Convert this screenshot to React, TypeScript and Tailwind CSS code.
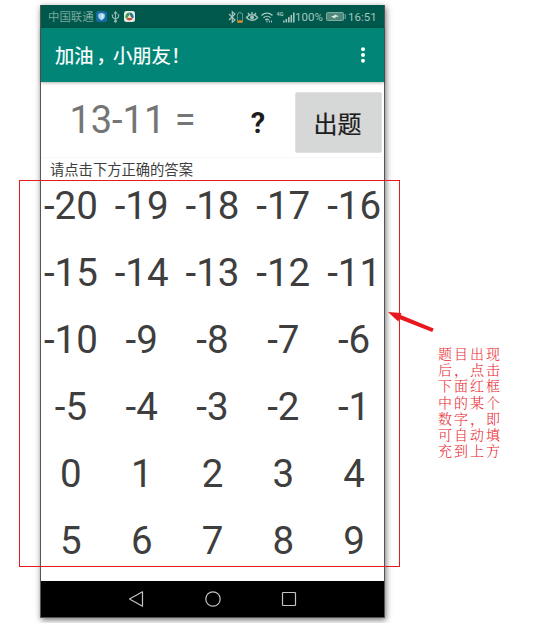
import React from 'react';

const answers = Array.from({ length: 30 }, (_, i) => i - 20);
const noteLines = ['题目出现', '后，点击', '下面红框', '中的某个', '数字，即', '可自动填', '充到上方'];

function ShieldIcon() {
  return (
    <svg className="h-[11px] w-[11px]" viewBox="0 0 11 11">
      <rect width="11" height="11" rx="2.5" fill="#176ba0" />
      <path d="M5.5 1.8 8.8 2.9v2.7c0 1.8-1.4 3-3.3 3.8-1.9-.8-3.3-2-3.3-3.8V2.9z" fill="#9bd3ee" />
      <path d="M5.5 3v5c1.2-.6 2-1.3 2-2.5V3.7z" fill="#d6eff8" />
    </svg>
  );
}

function UsbIcon() {
  return (
    <svg className="h-3 w-[9px]" viewBox="0 0 9 12" fill="none" stroke="#8fb9b2" strokeWidth="1.1">
      <path d="M4.5 1v9.5M3 2.6 4.5.8 6 2.6M1.5 4v2.2l3 2M7.5 3.5v2.7l-3 2" />
      <circle cx="4.5" cy="10.3" r="0.9" fill="#8fb9b2" />
      <path d="M.7 4h1.6M6.7 3.8h1.6" />
    </svg>
  );
}

function BrowserIcon() {
  return (
    <svg className="h-[11px] w-[11px]" viewBox="0 0 11 11">
      <rect width="11" height="11" rx="2.5" fill="#e3eae3" />
      <path d="M5.5 1.5A4 4 0 0 0 2 7.5l2-1.3 1.7-2.7z" fill="#3c9b4b" />
      <path d="M5.5 1.5a4 4 0 0 1 3.5 6L6.7 6l-1-2.5z" fill="#2b6e9b" />
      <path d="M2.2 7.7a4 4 0 0 0 6.6 0L6.7 6.8H4z" fill="#c94c38" />
      <path d="M3.8 6.8 5.8 3.5l1.5 3.3z" fill="#f1e4b0" />
    </svg>
  );
}

function StatusIcons() {
  return (
    <svg className="h-[14px] w-[68px] shrink-0" viewBox="0 0 68 14" fill="none" stroke="#a3c5be" strokeWidth="1">
      <path d="m1 4 6 6-2.7 2.3V1.7L7 4l-6 6" strokeWidth="1.2" />
      <path d="M9.5 3.5h1.3V2.3h2v1.2h1.7v8.8h-5z" stroke="#648f84" />
      <path d="M9.6 11.5h4.6" stroke="#f38b16" strokeWidth="2.2" />
      <path d="M18.5 7.5c3-3.8 8-3.8 11 0-3 3.8-8 3.8-11 0zM20 3l1.5 1.8M24 2v2.5M28 3l-1.5 1.8" strokeWidth="1.4" />
      <circle cx="24" cy="7.5" r="2" fill="#a3c5be" stroke="none" />
      <path d="M33.5 5.5c3.3-3 7.7-3 11 0M35.5 7.8c2-1.9 5-1.9 7 0M37.3 10c1-.9 2.4-.9 3.4 0" strokeWidth="1.4" />
      <path d="M39 10.5v2M41.5 10.5v2M43.5 10.5v2" strokeWidth="1" />
      <text x="48.5" y="6" fontSize="5.5" fontWeight="700" fontFamily="Roboto, sans-serif" fill="#a3c5be" stroke="none">4G</text>
      <path d="M55.8 10.5v2M58.3 9v3.5M60.8 7v5.5M63.3 5v7.5M65.8 2.5v10" strokeWidth="1.6" />
    </svg>
  );
}

function StatusBar() {
  return (
    <div className="flex h-[23px] shrink-0 items-center bg-[#00574b] pl-[7px] text-[#a3c5be]">
      <span className="w-[48px] pt-[3px] text-[11.4px] whitespace-nowrap text-[#78a9a0]">中国联通</span>
      <ShieldIcon />
      <div className="ml-[4px] flex"><UsbIcon /></div>
      <div className="ml-[4px] flex"><BrowserIcon /></div>
      <div className="ml-[93px] flex"><StatusIcons /></div>
      <span className="-ml-px w-[31px] pt-[2px] text-[11.5px] whitespace-nowrap">100%</span>
      <svg className="h-[9px] w-[20px]" viewBox="0 0 20 9">
        <rect x=".5" y=".5" width="17" height="8" rx="1" fill="#4f887c" stroke="#80aba1" />
        <path d="M19.2 2v5" stroke="#80aba1" />
        <path d="m5 4.5 3-.8.5-1.2L13 4.3l-3.5.8-.5 1.4z" fill="#dcece6" />
      </svg>
      <span className="ml-[2px] pt-[2px] text-[11.5px] whitespace-nowrap">16:51</span>
    </div>
  );
}

function NavBar() {
  return (
    <div className="mt-auto flex h-[36px] shrink-0 items-center justify-center gap-[60.5px] bg-black">
      <svg className="h-4 w-4" viewBox="0 0 16 16" fill="none" stroke="#c4c4c4" strokeWidth="1.2">
        <path d="M1.5 8 14.5.8v14.4z" strokeLinejoin="round" />
      </svg>
      <svg className="h-4 w-4" viewBox="0 0 16 16" fill="none" stroke="#c4c4c4" strokeWidth="1.2">
        <circle cx="8" cy="8" r="7.2" />
      </svg>
      <svg className="h-4 w-4" viewBox="0 0 16 16" fill="none" stroke="#c4c4c4" strokeWidth="1.2">
        <rect x="1.5" y="1.5" width="13" height="13" rx=".5" />
      </svg>
    </div>
  );
}

export default function App() {
  return (
    <main className="relative flex h-[623px] w-[535px] items-start overflow-hidden bg-white pt-[5px] pl-[40px] font-[Roboto,'Noto_Sans_CJK_SC',sans-serif]">
      <section className="flex h-[613px] w-[345px] shrink-0 flex-col border border-t-0 border-[#555] bg-white shadow-[1px_2px_6px_rgba(0,0,0,0.55)]">
        <StatusBar />
        <header className="z-10 flex h-[54px] shrink-0 items-center justify-between bg-[#008577] pr-[19px] pl-[14px] text-white shadow-[0_1px_3px_rgba(0,0,0,0.3)]">
          <h1 className="flex pt-[3px] text-[19.3px] leading-none [-webkit-text-stroke:0.2px_white]">
            <span>加油</span>
            <span className="w-[19.5px] pl-[3px]">，</span>
            <span>小朋友</span>
            <span>！</span>
          </h1>
          <svg className="h-4 w-1" viewBox="0 0 4 16" fill="white">
            <circle cx="2" cy="2.2" r="2" />
            <circle cx="2" cy="8" r="2" />
            <circle cx="2" cy="13.8" r="2" />
          </svg>
        </header>
        <div className="flex h-[76px] shrink-0 border-b border-[#f7f7f7]">
          <span className="w-[183px] pt-[15px] text-center text-[38px] leading-[46px] whitespace-nowrap text-[#757575]">13-11 =</span>
          <span className="w-[68px] pt-[18px] text-center text-[29px] leading-[46px] font-bold text-[#1d1d1d]">?</span>
          <button className="mt-[10px] ml-[3px] h-[61px] w-[87px] rounded-[2px] border border-[#e0e2e2] bg-[#d6d7d7] pt-[4px] pr-[2px] text-[24px] text-[#1d1d1d] [-webkit-text-stroke:0.2px_#1d1d1d]">出题</button>
        </div>
        <p className="h-[22px] shrink-0 pt-px pl-[9px] text-[14.3px] leading-[22px] text-[#3e3e3e]">请点击下方正确的答案</p>
        <div className="grid w-[354px] shrink-0 -translate-x-[5.5px] translate-y-px auto-rows-[50px] grid-cols-5 gap-y-[17px] text-center text-[38.5px] leading-[50px] text-[#3e3e3e]">
          {answers.map((n) => <span key={n}>{n}</span>)}
        </div>
        <NavBar />
      </section>
      <aside className="mt-[340px] ml-[53px] text-[14px] leading-[16.2px] font-light tracking-[2px] whitespace-nowrap text-[#ea2831] font-['Noto_Serif_CJK_SC','Noto_Sans_CJK_SC',serif]">
        {noteLines.map((line) => <p key={line}>{line}</p>)}
      </aside>
      <div className="pointer-events-none absolute top-[180px] left-[19px] z-20 h-[387px] w-[381px] border border-[#e7191f]" />
      <svg className="absolute top-[308px] left-[385px] z-20 h-[28px] w-[52px]" viewBox="0 0 52 28">
        <path d="m3 4 13.5 1-.8 2 33 13.5-1.5 3.5-33-13-1 2.6z" fill="#e7191f" />
      </svg>
    </main>
  );
}
